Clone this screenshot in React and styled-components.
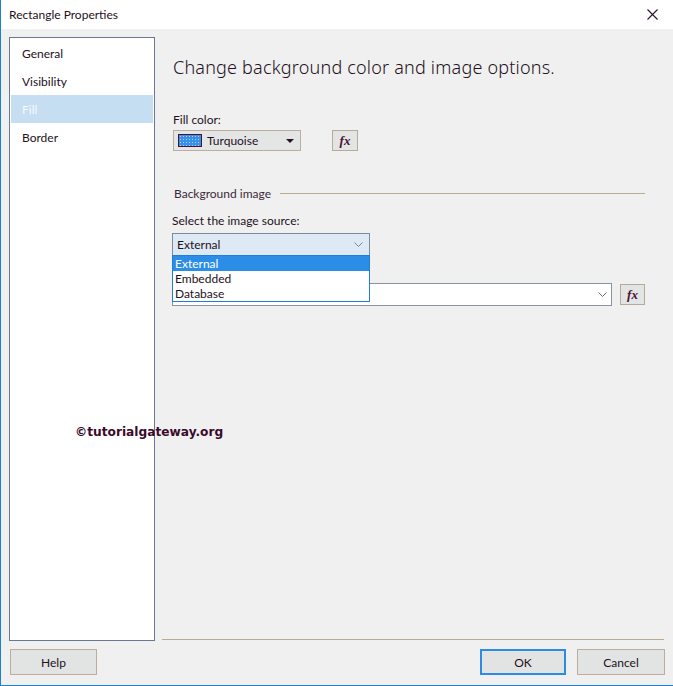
import styled, { createGlobalStyle } from "styled-components";

const GlobalStyle = createGlobalStyle`
  html, body {
    margin: 0;
    padding: 0;
    background: #ffffff;
  }
  * {
    box-sizing: border-box;
  }
`;

const TEXT = "#24101c";
const FONT = `Lato, "Noto Sans", sans-serif`;

const Window = styled.div`
  position: relative;
  width: 673px;
  height: 686px;
  display: flex;
  flex-direction: column;
  border-left: 1px solid #1c7fd8;
  border-bottom: 1px solid #1c7fd8;
  font-family: ${FONT};
  font-size: 12px;
  color: ${TEXT};
  background: #f0f0f0;
`;

const TitleBar = styled.div`
  height: 30px;
  background: #ffffff;
  display: flex;
  align-items: center;
  justify-content: space-between;
  padding: 0 15px 0 8px;
  font-size: 12px;
`;

const Body = styled.div`
  flex: 1;
  display: flex;
  gap: 7px;
  padding: 8px 9px 0 8px;
`;

const Nav = styled.ul`
  width: 146px;
  margin: 0;
  padding: 1px;
  list-style: none;
  background: #ffffff;
  border: 1px solid #6b7893;
  height: 604px;
`;

const NavItem = styled.li`
  height: 28px;
  display: flex;
  align-items: center;
  padding-left: 11px;
  background: ${(p) => (p.$active ? "#c6def2" : "transparent")};
  color: ${(p) => (p.$active ? "#f6f8fa" : TEXT)};
`;

const Right = styled.div`
  flex: 1;
  display: flex;
  flex-direction: column;
`;

const Content = styled.div`
  flex: 1;
  padding: 17px 19px 0 11px;
  display: flex;
  flex-direction: column;
`;

const Heading = styled.h1`
  margin: 0;
  font-family: "Noto Sans", sans-serif;
  font-size: 18px;
  font-weight: 300;
  line-height: 26px;
  letter-spacing: 0.2px;
`;

const Label = styled.div`
  margin: ${(p) => p.$mt || 0}px 0 0 ${(p) => p.$ml || 0}px;
  line-height: 16px;
`;

const Row = styled.div`
  display: flex;
  align-items: center;
  gap: ${(p) => p.$gap || 8}px;
  margin-top: ${(p) => p.$mt || 0}px;
`;

const ColorPicker = styled.div`
  width: 128px;
  height: 21px;
  border: 1px solid #bcae9c;
  background: #e4e6e6;
  display: flex;
  align-items: center;
  padding: 0 6px 0 4px;
  gap: 5px;
`;

const Swatch = styled.span`
  width: 24px;
  height: 13px;
  border: 1px solid #4a1230;
  background-color: #3a8fe8;
  background-image: radial-gradient(#a8d4fa 0.6px, transparent 0.8px);
  background-size: 3px 3px;
`;

const PickerText = styled.span`
  flex: 1;
`;

const Triangle = styled.span`
  width: 0;
  height: 0;
  border-left: 4px solid transparent;
  border-right: 4px solid transparent;
  border-top: 4px solid #2a1020;
`;

const FxButton = styled.button`
  width: ${(p) => p.$w || 26}px;
  height: 21px;
  padding: 0;
  border: 1px solid #b8aa98;
  background: #e3e4e4;
  font-family: "Liberation Serif", "DejaVu Serif", serif;
  font-style: italic;
  font-weight: bold;
  font-size: 13px;
  color: #4a1030;
  display: flex;
  align-items: center;
  justify-content: center;
`;

const GroupHeader = styled.div`
  display: flex;
  align-items: center;
  gap: 9px;
  margin-top: 35px;
  margin-left: 1px;
  line-height: 16px;
  color: #3a2a38;

  &::after {
    content: "";
    flex: 1;
    height: 1px;
    background: #bca98f;
    margin-top: -1px;
  }
`;

const SelectWrap = styled.div`
  position: relative;
  margin-top: 4px;
  margin-left: -1px;
  width: 198px;
`;

const SelectBox = styled.div`
  height: 23px;
  border: 1px solid #7d8aa0;
  background: #dde9f4;
  display: flex;
  align-items: center;
  justify-content: space-between;
  padding: 0 6px 0 4px;
`;

const DropList = styled.ul`
  position: absolute;
  left: 0;
  top: 22px;
  width: 198px;
  margin: 0;
  padding: 0;
  list-style: none;
  background: #ffffff;
  border: 1px solid #1e7ed8;
  z-index: 2;
`;

const DropItem = styled.li`
  height: 15px;
  line-height: 15px;
  padding-left: 2px;
  background: ${(p) => (p.$active ? "#2b8de6" : "transparent")};
  color: ${(p) => (p.$active ? "#ffffff" : TEXT)};
`;

const Combo = styled.div`
  flex: 1;
  height: 23px;
  margin-left: -1px;
  border: 1px solid #8a93a3;
  background: #ffffff;
  display: flex;
  align-items: center;
  justify-content: flex-end;
  padding-right: 4px;
`;

const Separator = styled.div`
  height: 1px;
  background: #bca98f;
  margin-bottom: 1px;
`;

const Footer = styled.div`
  display: flex;
  align-items: center;
  gap: 11px;
  padding: 8px 8px 10px 9px;
`;

const Spacer = styled.div`
  flex: 1;
`;

const Button = styled.button`
  width: ${(p) => p.$w || 87}px;
  height: 26px;
  padding: 0;
  font-family: ${FONT};
  font-size: 12px;
  color: ${TEXT};
  background: #e2e3e3;
  border: ${(p) => (p.$primary ? "2px solid #2d8be8" : "1px solid #bcae9c")};
`;

const Watermark = styled.div`
  position: absolute;
  left: 74px;
  top: 425px;
  font-family: "DejaVu Sans", Verdana, sans-serif;
  font-weight: bold;
  font-size: 12.2px;
  color: #3a0a2a;
  z-index: 1;
`;

function Chevron({ color = "#6a6a6a" }) {
  return (
    <svg width="9" height="6" viewBox="0 0 9 6">
      <polyline points="0.5,0.5 4.5,4.5 8.5,0.5" fill="none" stroke={color} strokeWidth="1" />
    </svg>
  );
}

function CloseIcon() {
  return (
    <svg width="11" height="11" viewBox="0 0 11 11">
      <line x1="0.5" y1="0.5" x2="10.5" y2="10.5" stroke="#2a1030" strokeWidth="1.1" />
      <line x1="10.5" y1="0.5" x2="0.5" y2="10.5" stroke="#2a1030" strokeWidth="1.1" />
    </svg>
  );
}

const pages = ["General", "Visibility", "Fill", "Border"];
const sources = ["External", "Embedded", "Database"];

export default function App() {
  return (
    <>
      <GlobalStyle />
      <Window>
        <TitleBar>
          <span>Rectangle Properties</span>
          <CloseIcon />
        </TitleBar>

        <Body>
          <Nav>
            {pages.map((p) => (
              <NavItem key={p} $active={p === "Fill"}>
                {p}
              </NavItem>
            ))}
          </Nav>

          <Right>
            <Content>
              <Heading>Change background color and image options.</Heading>

              <Label $mt={32}>Fill color:</Label>
              <Row $mt={2} $gap={31}>
                <ColorPicker>
                  <Swatch />
                  <PickerText>Turquoise</PickerText>
                  <Triangle />
                </ColorPicker>
                <FxButton $w={26}>fx</FxButton>
              </Row>

              <GroupHeader>Background image</GroupHeader>

              <Label $mt={11} $ml={-1}>Select the image source:</Label>
              <SelectWrap>
                <SelectBox>
                  <span>External</span>
                  <Chevron color="#7a8494" />
                </SelectBox>
                <DropList>
                  {sources.map((s) => (
                    <DropItem key={s} $active={s === "External"}>
                      {s}
                    </DropItem>
                  ))}
                </DropList>
              </SelectWrap>

              <Row $mt={27} $gap={8}>
                <Combo>
                  <Chevron />
                </Combo>
                <FxButton $w={25}>fx</FxButton>
              </Row>
            </Content>
            <Separator />
          </Right>
        </Body>

        <Footer>
          <Button>Help</Button>
          <Spacer />
          <Button $primary $w={86}>OK</Button>
          <Button $w={88}>Cancel</Button>
        </Footer>

        <Watermark>©tutorialgateway.org</Watermark>
      </Window>
    </>
  );
}
